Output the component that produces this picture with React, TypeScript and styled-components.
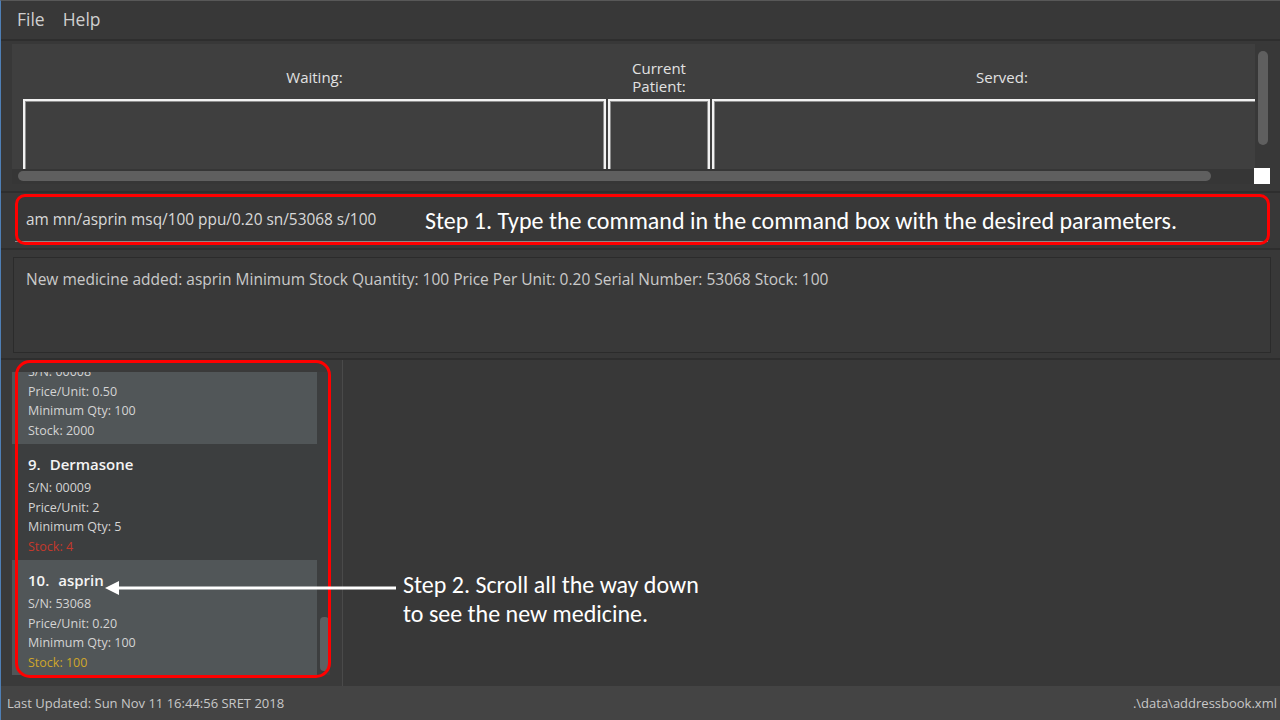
import React from "react";
import styled, { createGlobalStyle } from "styled-components";

const GlobalStyle = createGlobalStyle`
  html, body { margin: 0; padding: 0; background: #383838; }
  body {
    width: 1280px; height: 720px; overflow: hidden;
    font-family: "Open Sans", "Noto Sans", sans-serif;
  }
  * { box-sizing: border-box; }
`;

const UI_FONT = `"Open Sans", "Noto Sans", sans-serif`;
const NOTE_FONT = `Carlito, Lato, "Liberation Sans", sans-serif`;

const Window = styled.div`
  position: relative;
  width: 1280px;
  height: 720px;
  display: flex;
  flex-direction: column;
  background: #383838;
  border-top: 1px solid #585858;
  border-left: 1px solid #4f7fb5;
  overflow: hidden;
`;

const MenuBar = styled.div`
  height: 40px;
  flex: none;
  display: flex;
  align-items: center;
  gap: 18px;
  padding: 0 0 2px 16px;
  background: #383838;
  border-bottom: 2px solid #2e2e2e;
`;

const MenuItem = styled.span`
  font-family: ${UI_FONT};
  font-size: 17.5px;
  color: #cfcfcf;
`;

const QueueSection = styled.div`
  flex: none;
  height: 152px;
  padding: 3px 0 0 11px;
  display: grid;
  grid-template-columns: 1243px 16px;
  grid-template-rows: 125px 15px;
  align-content: start;
  border-bottom: 2px solid #2e2e2e;
`;

const QueueViewport = styled.div`
  background: #3f3f3f;
  display: flex;
  gap: 2px;
  padding-left: 11px;
  overflow: hidden;
`;

const QueueColumn = styled.div<{ $w: number }>`
  flex: none;
  width: ${(p) => p.$w}px;
  display: flex;
  flex-direction: column;
`;

const QueueHeader = styled.div`
  height: 55px;
  flex: none;
  padding-top: 10px;
  display: flex;
  flex-direction: column;
  align-items: center;
  justify-content: center;
  text-align: center;
  font-family: ${UI_FONT};
  font-size: 15px;
  line-height: 18px;
  color: #e2e2e2;
`;

const HeaderLine = styled.span`
  display: block;
  height: 18px;
`;

const QueueBox = styled.div`
  flex: 1;
  border: 2px solid #f2f2f2;
  border-bottom: none;
  box-shadow: inset 1px 1px 0 #8e8e8e, inset -1px 0 0 #8e8e8e;
`;

const VTrack = styled.div`
  padding: 7px 3px 0 3px;
`;

const VThumb = styled.div`
  width: 10px;
  height: 94px;
  border-radius: 5px;
  background: #5f5f5f;
`;

const HTrack = styled.div`
  padding: 2px 0 0 6px;
  background: #363636;
`;

const HThumb = styled.div`
  width: 1193px;
  height: 10px;
  border-radius: 5px;
  background: #5f5f5f;
`;

const Corner = styled.div`
  width: 16px;
  height: 16px;
  margin: -1px 0 0 -1px;
  background: #ffffff;
`;

const CommandSection = styled.div`
  flex: none;
  height: 57px;
  padding: 4px 12px 0 14px;
  border-bottom: 2px solid #2e2e2e;
`;

const CommandInput = styled.div`
  height: 45px;
  display: flex;
  align-items: center;
  padding: 0 0 0 11px;
  font-family: ${UI_FONT};
  font-size: 15.4px;
  color: #d8d8d8;
  border-bottom: 1px solid #8a8a8a;
`;

const ResultSection = styled.div`
  flex: none;
  height: 110px;
  padding: 7px 9px 0 12px;
  border-bottom: 2px solid #2e2e2e;
`;

const ResultBox = styled.div`
  height: 96px;
  border: 1px solid #2b2b2b;
  background: #393939;
  padding: 10px 12px;
  font-family: ${UI_FONT};
  font-size: 15.5px;
  color: #cacaca;
`;

const MainArea = styled.div`
  flex: 1;
  display: flex;
  min-height: 0;
`;

const ListPane = styled.div`
  width: 342px;
  flex: none;
  padding: 12px 12px 0 11px;
  border-right: 1px solid #4a4a4a;
  background: #3a3a3a;
`;

const ListView = styled.div`
  width: 318px;
  height: 303px;
  display: flex;
  background: #3c3e3f;
`;

const ListViewport = styled.div`
  width: 305px;
  height: 100%;
  overflow: hidden;
`;

const ListContent = styled.div``;

const ListScroll = styled.div`
  flex: 1;
  padding: 245px 1px 0 3px;
  background: #3c3e3f;
`;

const ListThumb = styled.div`
  height: 54px;
  border-radius: 4px;
  background: #5d6163;
`;

const Card = styled.div<{ $odd: boolean }>`
  height: 116px;
  padding: 9px 0 0 16px;
  background: ${(p) => (p.$odd ? "#515658" : "#3c3e3f")};
`;

const CardTitle = styled.div`
  display: flex;
  gap: 9px;
  height: 22px;
  margin-bottom: 3px;
  align-items: center;
  font-family: ${UI_FONT};
  font-weight: 600;
  font-size: 15px;
  color: #f4f4f4;
`;

const CardLine = styled.div<{ $color?: string }>`
  height: 19.5px;
  line-height: 19.5px;
  font-family: ${UI_FONT};
  font-size: 12.5px;
  color: ${(p) => p.$color ?? "#d4d4d4"};
`;

const RightPane = styled.div`
  flex: 1;
  background: #383838;
`;

const StatusBar = styled.div`
  flex: none;
  height: 34px;
  display: flex;
  align-items: center;
  justify-content: space-between;
  padding: 0 3px 0 6px;
  background: #444444;
  font-family: ${UI_FONT};
  font-size: 13px;
  color: #c8c8c8;
`;

/* annotation overlays */
const RedOutline = styled.div<{ $l: number; $t: number; $w: number; $h: number; $r: number }>`
  position: absolute;
  left: ${(p) => p.$l}px;
  top: ${(p) => p.$t}px;
  width: ${(p) => p.$w}px;
  height: ${(p) => p.$h}px;
  border: 3px solid #ff0000;
  border-radius: ${(p) => p.$r}px;
  pointer-events: none;
`;

const Note = styled.div<{ $l: number; $t: number }>`
  position: absolute;
  left: ${(p) => p.$l}px;
  top: ${(p) => p.$t}px;
  font-family: ${NOTE_FONT};
  font-size: 24px;
  line-height: 29px;
  color: #ffffff;
  white-space: nowrap;
`;

const ArrowSvg = styled.svg`
  position: absolute;
  left: 104px;
  top: 577px;
`;

type Med = {
  idx: number;
  name: string;
  sn: string;
  price: string;
  min: string;
  stock: string;
  stockColor?: string;
};

const meds: Med[] = [
  { idx: 8, name: "Panadol", sn: "00008", price: "0.50", min: "100", stock: "2000" },
  { idx: 9, name: "Dermasone", sn: "00009", price: "2", min: "5", stock: "4", stockColor: "#c4392c" },
  { idx: 10, name: "asprin", sn: "53068", price: "0.20", min: "100", stock: "100", stockColor: "#cfa62a" },
];

const listScrollOffset = 44;

export default function App() {
  return (
    <>
      <GlobalStyle />
      <Window>
        <MenuBar>
          <MenuItem>File</MenuItem>
          <MenuItem>Help</MenuItem>
        </MenuBar>

        <QueueSection>
          <QueueViewport>
            <QueueColumn $w={583}>
              <QueueHeader>
                <HeaderLine>Waiting:</HeaderLine>
              </QueueHeader>
              <QueueBox />
            </QueueColumn>
            <QueueColumn $w={102}>
              <QueueHeader>
                <HeaderLine>Current</HeaderLine>
                <HeaderLine>Patient:</HeaderLine>
              </QueueHeader>
              <QueueBox />
            </QueueColumn>
            <QueueColumn $w={580}>
              <QueueHeader>
                <HeaderLine>Served:</HeaderLine>
              </QueueHeader>
              <QueueBox />
            </QueueColumn>
          </QueueViewport>
          <VTrack>
            <VThumb />
          </VTrack>
          <HTrack>
            <HThumb />
          </HTrack>
          <Corner />
        </QueueSection>

        <CommandSection>
          <CommandInput>am mn/asprin msq/100 ppu/0.20 sn/53068 s/100</CommandInput>
        </CommandSection>

        <ResultSection>
          <ResultBox>
            New medicine added: asprin Minimum Stock Quantity: 100 Price Per Unit: 0.20 Serial Number: 53068 Stock: 100
          </ResultBox>
        </ResultSection>

        <MainArea>
          <ListPane>
            <ListView>
              <ListViewport>
                <ListContent style={{ marginTop: -listScrollOffset }}>
                  {meds.map((m) => (
                    <Card key={m.idx} $odd={m.idx % 2 === 0}>
                      <CardTitle>
                        <span>{m.idx}.</span>
                        <span>{m.name}</span>
                      </CardTitle>
                      <CardLine>S/N: {m.sn}</CardLine>
                      <CardLine>Price/Unit: {m.price}</CardLine>
                      <CardLine>Minimum Qty: {m.min}</CardLine>
                      <CardLine $color={m.stockColor}>Stock: {m.stock}</CardLine>
                    </Card>
                  ))}
                </ListContent>
              </ListViewport>
              <ListScroll>
                <ListThumb />
              </ListScroll>
            </ListView>
          </ListPane>
          <RightPane />
        </MainArea>

        <StatusBar>
          <span>Last Updated: Sun Nov 11 16:44:56 SRET 2018</span>
          <span>.\data\addressbook.xml</span>
        </StatusBar>

        <RedOutline $l={14} $t={193} $w={1255} $h={51} $r={10} />
        <Note $l={424} $t={205}>
          Step 1. Type the command in the command box with the desired parameters.
        </Note>

        <RedOutline $l={14} $t={359} $w={316} $h={318} $r={15} />
        <ArrowSvg width="294" height="20" viewBox="0 0 294 20">
          <line x1="12" y1="10" x2="291" y2="10" stroke="#ffffff" strokeWidth="3" />
          <polygon points="0,10 14,3 14,17" fill="#ffffff" />
        </ArrowSvg>
        <Note $l={402} $t={569}>
          Step 2. Scroll all the way down
          <br />
          to see the new medicine.
        </Note>
      </Window>
    </>
  );
}
